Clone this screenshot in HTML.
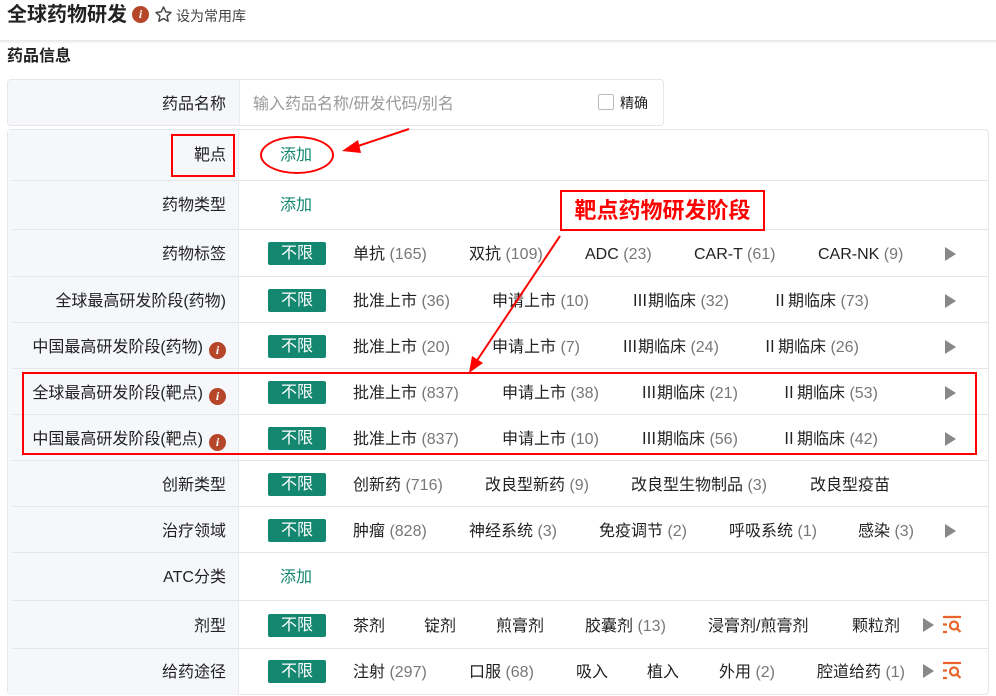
<!DOCTYPE html>
<html><head><meta charset="utf-8">
<style>
*{margin:0;padding:0;box-sizing:border-box}
body{width:996px;height:696px;overflow:hidden;background:#fff;font-family:"Liberation Sans","Noto Sans CJK SC",sans-serif;color:#222;position:relative}
.a{position:absolute;white-space:nowrap}
.t{font-size:16px;line-height:20px;margin-top:2px}
.c{color:#777}
.lab{position:absolute;left:8px;width:231px;background:#f5f7fa;}
.ln{position:absolute;left:12px;width:976px;height:1px;background:#e4e6ea}
.bd{position:absolute;left:268px;width:58px;height:23px;background:#138770;color:#fff;font-size:16px;line-height:23px;text-align:center;border-radius:2px}
.tri{position:absolute;width:0;height:0;border-left:11px solid #888;border-top:7.5px solid transparent;border-bottom:7.5px solid transparent}
.inf{display:inline-block;width:17px;height:17px;border-radius:50%;background:#b5462a;color:#fff;font:italic bold 12px/17px "Liberation Serif",serif;text-align:center;vertical-align:-2px;margin-left:6px}
.lt{position:absolute;right:770px;font-size:16px;line-height:20px;text-align:right;white-space:nowrap;margin-top:2px}
.add{color:#138770}
</style></head><body>
<div class="a" style="left:7px;top:2px;font-size:20px;font-weight:bold;line-height:26px">全球药物研发</div>
<div class="a" style="left:132px;top:6px;width:17px;height:17px;border-radius:50%;background:#b5462a;color:#fff;font:italic bold 12px/17px 'Liberation Serif',serif;text-align:center">i</div>
<svg class="a" style="left:154px;top:5px" width="19" height="19" viewBox="0 0 24 24"><path d="M12 2.5l2.9 6.2 6.6.7-5 4.5 1.4 6.6L12 17.1l-5.9 3.4 1.4-6.6-5-4.5 6.6-.7z" fill="none" stroke="#444" stroke-width="1.8" stroke-linejoin="round"/></svg>
<div class="a" style="left:176px;top:7px;font-size:14px;line-height:18px;color:#444">设为常用库</div>
<div class="a" style="left:0;top:40px;width:996px;height:4px;background:linear-gradient(#e6e6e6,#fff)"></div>
<div class="a" style="left:7px;top:47px;font-size:16px;font-weight:bold;line-height:20px">药品信息</div>

<div class="a" style="left:7px;top:79px;width:657px;height:47px;border:1px solid #e4e6ea;border-radius:4px;overflow:hidden">
 <div style="position:absolute;left:0;top:0;width:232px;height:45px;background:#f5f7fa;border-right:1px solid #e8eaee"></div>
</div>
<div class="lt" style="top:93px">药品名称</div>
<div class="a t" style="left:253px;top:93px;color:#999">输入药品名称/研发代码/别名</div>
<div class="a" style="left:598px;top:94px;width:16px;height:16px;border:1px solid #bbb;border-radius:2px"></div>
<div class="a" style="left:620px;top:94px;font-size:14px;line-height:18px">精确</div>

<div class="a" style="left:7px;top:129px;width:982px;height:566px;border:1px solid #e4e6ea;border-radius:4px"></div>
<div class="lab" style="top:130px;height:565px;border-right:1px solid #e8eaee"></div>
<div class="ln" style="top:180px"></div><div class="ln" style="top:229px"></div><div class="ln" style="top:276px"></div>
<div class="ln" style="top:322px"></div><div class="ln" style="top:368px"></div><div class="ln" style="top:414px"></div>
<div class="ln" style="top:460px"></div><div class="ln" style="top:506px"></div><div class="ln" style="top:552px"></div>
<div class="ln" style="top:600px"></div><div class="ln" style="top:648px"></div>

<div class="lt" style="top:144px">靶点</div>
<div class="lt" style="top:194px">药物类型</div>
<div class="lt" style="top:243px">药物标签</div>
<div class="lt" style="top:290px">全球最高研发阶段(药物)</div>
<div class="lt" style="top:336px">中国最高研发阶段(药物)<span class="inf">i</span></div>
<div class="lt" style="top:382px">全球最高研发阶段(靶点)<span class="inf">i</span></div>
<div class="lt" style="top:428px">中国最高研发阶段(靶点)<span class="inf">i</span></div>
<div class="lt" style="top:474px">创新类型</div>
<div class="lt" style="top:520px">治疗领域</div>
<div class="lt" style="top:566px">ATC分类</div>
<div class="lt" style="top:615px">剂型</div>
<div class="lt" style="top:661px">给药途径</div>

<div class="a t add" style="left:280px;top:144px">添加</div>
<div class="a t add" style="left:280px;top:194px">添加</div>

<div class="bd" style="top:242px">不限</div>
<div class="a t" style="left:353px;top:243px">单抗 <span class="c">(165)</span></div>
<div class="a t" style="left:469px;top:243px">双抗 <span class="c">(109)</span></div>
<div class="a t" style="left:585px;top:243px">ADC <span class="c">(23)</span></div>
<div class="a t" style="left:694px;top:243px">CAR-T <span class="c">(61)</span></div>
<div class="a t" style="left:818px;top:243px">CAR-NK <span class="c">(9)</span></div>
<div class="tri" style="left:945px;top:247px"></div>

<div class="bd" style="top:289px">不限</div>
<div class="a t" style="left:353px;top:290px">批准上市 <span class="c">(36)</span></div>
<div class="a t" style="left:492px;top:290px">申请上市 <span class="c">(10)</span></div>
<div class="a t" style="left:632px;top:290px">Ⅲ期临床 <span class="c">(32)</span></div>
<div class="a t" style="left:772px;top:290px">Ⅱ期临床 <span class="c">(73)</span></div>
<div class="tri" style="left:945px;top:294px"></div>

<div class="bd" style="top:335px">不限</div>
<div class="a t" style="left:353px;top:336px">批准上市 <span class="c">(20)</span></div>
<div class="a t" style="left:492px;top:336px">申请上市 <span class="c">(7)</span></div>
<div class="a t" style="left:622px;top:336px">Ⅲ期临床 <span class="c">(24)</span></div>
<div class="a t" style="left:762px;top:336px">Ⅱ期临床 <span class="c">(26)</span></div>
<div class="tri" style="left:945px;top:340px"></div>

<div class="bd" style="top:381px">不限</div>
<div class="a t" style="left:353px;top:382px">批准上市 <span class="c">(837)</span></div>
<div class="a t" style="left:502px;top:382px">申请上市 <span class="c">(38)</span></div>
<div class="a t" style="left:641px;top:382px">Ⅲ期临床 <span class="c">(21)</span></div>
<div class="a t" style="left:781px;top:382px">Ⅱ期临床 <span class="c">(53)</span></div>
<div class="tri" style="left:945px;top:386px"></div>

<div class="bd" style="top:427px">不限</div>
<div class="a t" style="left:353px;top:428px">批准上市 <span class="c">(837)</span></div>
<div class="a t" style="left:502px;top:428px">申请上市 <span class="c">(10)</span></div>
<div class="a t" style="left:641px;top:428px">Ⅲ期临床 <span class="c">(56)</span></div>
<div class="a t" style="left:781px;top:428px">Ⅱ期临床 <span class="c">(42)</span></div>
<div class="tri" style="left:945px;top:432px"></div>

<div class="bd" style="top:473px">不限</div>
<div class="a t" style="left:353px;top:474px">创新药 <span class="c">(716)</span></div>
<div class="a t" style="left:485px;top:474px">改良型新药 <span class="c">(9)</span></div>
<div class="a t" style="left:631px;top:474px">改良型生物制品 <span class="c">(3)</span></div>
<div class="a t" style="left:810px;top:474px">改良型疫苗</div>

<div class="bd" style="top:519px">不限</div>
<div class="a t" style="left:353px;top:520px">肿瘤 <span class="c">(828)</span></div>
<div class="a t" style="left:469px;top:520px">神经系统 <span class="c">(3)</span></div>
<div class="a t" style="left:599px;top:520px">免疫调节 <span class="c">(2)</span></div>
<div class="a t" style="left:729px;top:520px">呼吸系统 <span class="c">(1)</span></div>
<div class="a t" style="left:858px;top:520px">感染 <span class="c">(3)</span></div>
<div class="tri" style="left:945px;top:524px"></div>

<div class="a t add" style="left:280px;top:566px">添加</div>

<div class="bd" style="top:614px">不限</div>
<div class="a t" style="left:353px;top:615px">茶剂</div>
<div class="a t" style="left:424px;top:615px">锭剂</div>
<div class="a t" style="left:496px;top:615px">煎膏剂</div>
<div class="a t" style="left:585px;top:615px">胶囊剂 <span class="c">(13)</span></div>
<div class="a t" style="left:708px;top:615px">浸膏剂/煎膏剂</div>
<div class="a t" style="left:852px;top:615px">颗粒剂</div>
<div class="tri" style="left:923px;top:618px"></div>
<svg class="a" style="left:940px;top:615px" width="24" height="20" viewBox="0 0 24 20"><g stroke="#e8642a" stroke-width="2.2" fill="none"><path d="M3 2h18M3 9.5h4M3 17h4"/><circle cx="14" cy="10.5" r="4"/><path d="M17 13.5l3.5 3.5"/></g></svg>

<div class="bd" style="top:660px">不限</div>
<div class="a t" style="left:353px;top:661px">注射 <span class="c">(297)</span></div>
<div class="a t" style="left:469px;top:661px">口服 <span class="c">(68)</span></div>
<div class="a t" style="left:576px;top:661px">吸入</div>
<div class="a t" style="left:647px;top:661px">植入</div>
<div class="a t" style="left:719px;top:661px">外用 <span class="c">(2)</span></div>
<div class="a t" style="left:817px;top:661px">腔道给药 <span class="c">(1)</span></div>
<div class="tri" style="left:923px;top:664px"></div>
<svg class="a" style="left:940px;top:661px" width="24" height="20" viewBox="0 0 24 20"><g stroke="#e8642a" stroke-width="2.2" fill="none"><path d="M3 2h18M3 9.5h4M3 17h4"/><circle cx="14" cy="10.5" r="4"/><path d="M17 13.5l3.5 3.5"/></g></svg>

<div class="a" style="left:171px;top:134px;width:64px;height:43px;border:2px solid #f00"></div>
<div class="a" style="left:260px;top:136px;width:74px;height:38px;border:2px solid #f00;border-radius:50%"></div>
<div class="a" style="left:22px;top:372px;width:955px;height:83px;border:2px solid #f00"></div>
<div class="a" style="left:560px;top:190px;width:205px;height:41px;border:2px solid #f00;background:#fff;color:#f00;font-size:22px;font-weight:bold;line-height:37px;text-align:center">靶点药物研发阶段</div>
<svg class="a" style="left:0;top:0" width="996" height="696">
<g stroke="#f00" stroke-width="2" fill="#f00">
<line x1="409" y1="129" x2="355" y2="147"/>
<polygon points="342,151 358,140 361,153" stroke="none"/>
<line x1="560" y1="236" x2="476" y2="362"/>
<polygon points="469,373 472,356 483,363" stroke="none"/>
</g></svg>
</body></html>
